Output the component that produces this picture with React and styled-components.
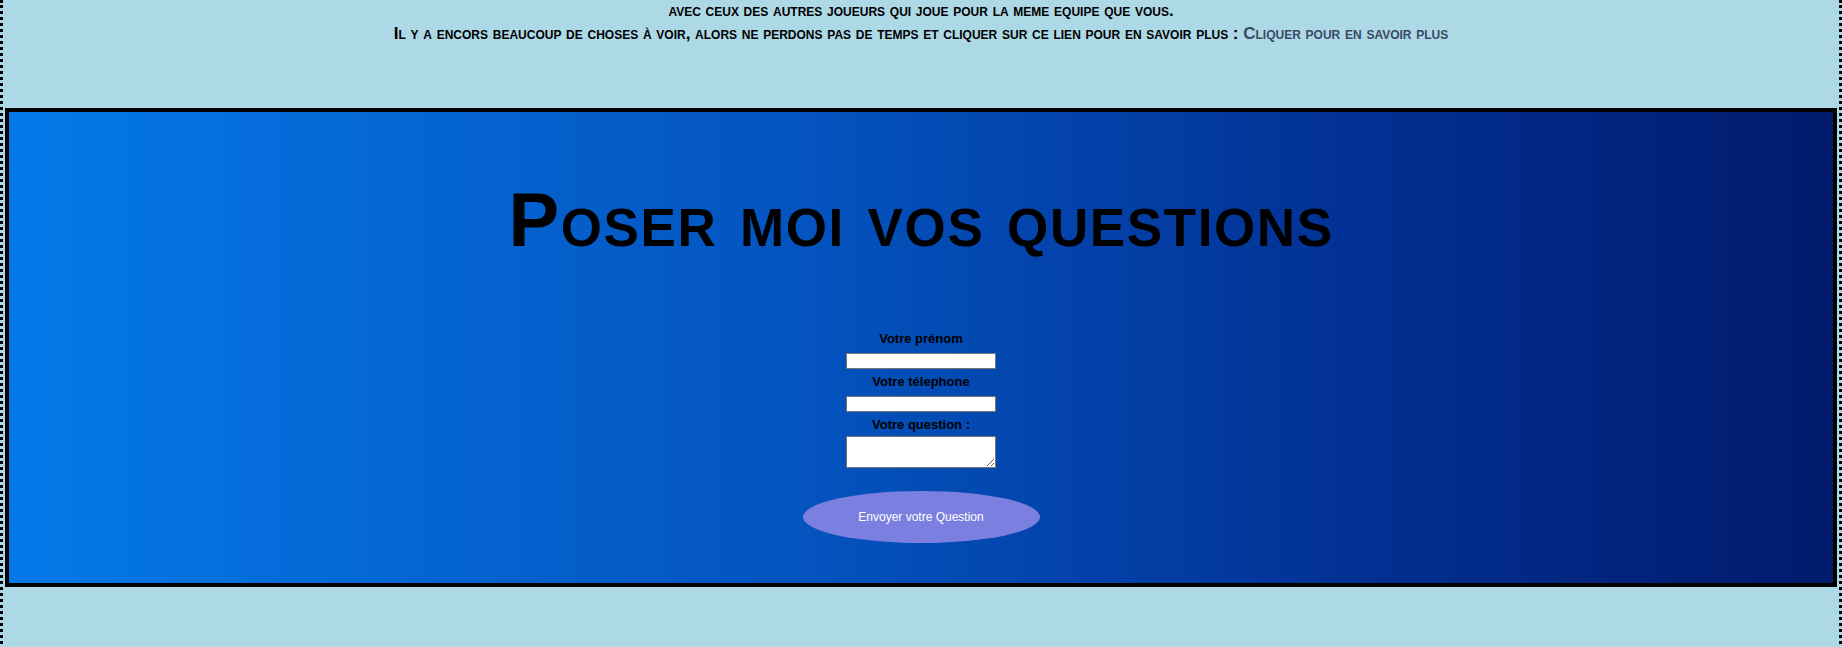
import React from "react";
import styled, { createGlobalStyle } from "styled-components";

const Global = createGlobalStyle`
  html, body { margin: 0; padding: 0; }
  body {
    background: #add8e6;
    font-family: "Liberation Sans", Arial, sans-serif;
    border-left: 3px dotted #000;
    border-right: 3px dotted #000;
    min-height: 100vh;
    box-sizing: border-box;
  }
`;

const Page = styled.div`
  display: flex;
  flex-direction: column;
  padding: 0 2px 80px 2px;
`;

const Intro = styled.header`
  display: flex;
  flex-direction: column;
  align-items: center;
  padding-top: 1px;
  gap: 3.5px;
`;

const IntroLine = styled.p`
  margin: 0;
  font-size: 17px;
  line-height: 19px;
  font-weight: bold;
  font-variant: small-caps;
  text-align: center;
  color: #000;
`;

const MoreLink = styled.a`
  color: #3a4a64;
  text-decoration: none;
`;

const Panel = styled.section`
  margin-top: 65.5px;
  border: 4px solid #000;
  background: linear-gradient(to right, #0479e8 0%, #0452bd 45%, #022f92 75%, #011a6c 100%);
  display: flex;
  flex-direction: column;
  align-items: center;
  padding: 60px 0 40px;
`;

const Title = styled.h1`
  margin: 0 0 63px;
  font-size: 76px;
  line-height: 96px;
  font-weight: bold;
  font-variant: small-caps;
  letter-spacing: 1.6px;
  color: #000;
`;

const Form = styled.form`
  display: flex;
  flex-direction: column;
  align-items: center;
`;

const Label = styled.label`
  font-size: 13px;
  line-height: 15px;
  font-weight: bold;
  color: #000;
  margin-top: ${(p) => (p.$first ? "0" : "5px")};
  margin-bottom: ${(p) => p.$gap || "7px"};
`;

const Input = styled.input`
  box-sizing: border-box;
  width: 150px;
  height: 16px;
  border: 1px solid #767676;
  background: #fff;
  padding: 0 2px;
  font-size: 11px;
`;

const TextArea = styled.textarea`
  box-sizing: border-box;
  width: 150px;
  height: 32px;
  border: 1px solid #767676;
  background: #fff;
  padding: 2px;
  font-size: 11px;
  display: block;
`;

const SendButton = styled.button`
  margin-top: 23px;
  width: 237px;
  height: 52px;
  border: none;
  border-radius: 50%;
  background: #7b7fe0;
  color: #fff;
  font-family: "Liberation Sans", Arial, sans-serif;
  font-size: 12px;
  cursor: pointer;
`;

export default function App() {
  return (
    <>
      <Global />
      <Page>
        <Intro>
          <IntroLine>avec ceux des autres joueurs qui joue pour la meme equipe que vous.</IntroLine>
          <IntroLine>
            Il y a encors beaucoup de choses à voir, alors ne perdons pas de temps et cliquer sur ce lien pour en savoir plus :{" "}
            <MoreLink href="#">Cliquer pour en savoir plus</MoreLink>
          </IntroLine>
        </Intro>
        <Panel>
          <Title>Poser moi vos questions</Title>
          <Form onSubmit={(e) => e.preventDefault()}>
            <Label $first htmlFor="prenom">Votre prénom</Label>
            <Input id="prenom" type="text" />
            <Label htmlFor="tel">Votre télephone</Label>
            <Input id="tel" type="text" />
            <Label htmlFor="question" $gap="4px">Votre question :</Label>
            <TextArea id="question" />
            <SendButton type="submit">Envoyer votre Question</SendButton>
          </Form>
        </Panel>
      </Page>
    </>
  );
}
